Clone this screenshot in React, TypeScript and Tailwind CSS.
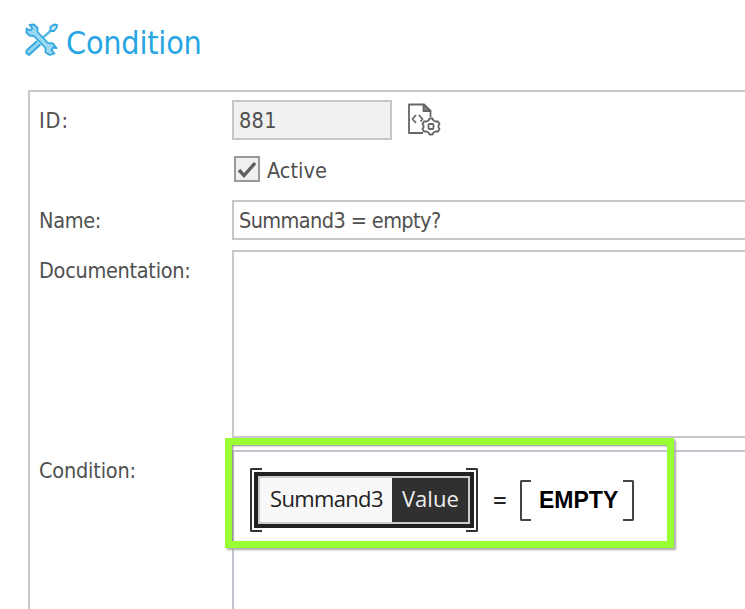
import type { ReactNode } from "react";

// Label + field row of the form
const Row = ({
  label,
  labelClass = "",
  className,
  children,
}: {
  label?: string;
  labelClass?: string;
  className: string;
  children: ReactNode;
}) => (
  <div className={`flex ${className}`}>
    <div className={`w-[202px] shrink-0 pl-[9px] pt-[7px] leading-[28px] ${labelClass}`}>{label}</div>
    {children}
  </div>
);

// Crossed wrench and screwdriver
const ToolsIcon = () => (
  <svg className="w-[33px] h-[34px] shrink-0" viewBox="0 0 33 34" fill="none" stroke="#35a9df" strokeWidth="1.8" strokeLinejoin="round">
    <path d="M17 15.5 L26 7.5" strokeWidth="2.4" stroke="#5fbce7" />
    <path d="M25.5 8 L25.5 4 L29 1.5 L32 2 L31.5 5 L29 8 Z" fill="#c8eaf8" />
    <path d="M12 18 L1.5 27.5 L1.5 30.5 L4 32 L15.5 21.5" fill="#8ed3f1" />
    <path d="M4.5 2 L9 1.5 L12.5 5 L12.5 9 L23 20 L28 20.5 L31.5 25 L28 24.5 L26.5 27 L29.5 30.5 L25 32 L20.5 29.5 L20.5 25 L9 13 L4.5 12.5 L1.5 9.5 L1.5 5.5 L5 7.5 L7.5 5.5 Z" fill="#9bd8f3" />
  </svg>
);

// Source file with a gear in front
const FileCodeIcon = () => (
  <svg className="w-[34px] h-[34px] shrink-0" viewBox="0 0 34 34" fill="none" stroke="#666" strokeWidth="1.8" strokeLinejoin="round">
    <path d="M16 30 H2 V1.5 H17 L23.5 8 V14" />
    <path d="M16.5 1.5 V8 H23.5 Z" fill="#888" />
    <path d="M9 12 L5.5 16 L9 20 M12 12 L15.5 16 L13.5 18.5" />
    <path d="M21.5 17.5 L22.5 15.5 H25.5 L26.5 17.5 L28.5 18.5 L31 18.5 L32.5 21 L31.5 22.5 V24.5 L32.5 26 L31 28.5 L28.5 28.5 L26.5 29.5 L25.5 31.5 H22.5 L21.5 29.5 L19.5 28.5 L17 28.5 L15.5 26 L16.5 24.5 V22.5 L15.5 21 L17 18.5 L19.5 18.5 Z" fill="#fff" strokeWidth="1.8" />
    <rect x="21.5" y="21" width="5" height="5" rx="1" />
  </svg>
);

const App = () => {
  return (
    <div className="h-[609px] w-[745px] overflow-hidden bg-white text-[#505050] text-[21.5px] font-['DejaVu_Sans_Condensed','DejaVu_Sans',sans-serif] [font-stretch:condensed]">
      {/* Page title */}
      <div className="flex h-[90px] pl-[25px] pt-[23px]">
        <ToolsIcon />
        <h1 className="ml-[8px] text-[32px] leading-[40px] tracking-[-0.2px] text-[#28a5e3]">Condition</h1>
      </div>

      {/* Form panel, cut off at the right and the bottom */}
      <div className="ml-[28px] h-[519px] border-l-2 border-t-2 border-[#c9c9c9] pt-[8px]">
        <Row label="ID:" labelClass="tracking-[0.9px]" className="h-[50px]">
          <div className="h-[40px] w-[160px] border-2 border-[#c8c8c8] bg-[#f1f1f1] pl-[5px] leading-[37px] tracking-[0.3px]">881</div>
          <div className="ml-[15px] pt-[3px]">
            <FileCodeIcon />
          </div>
        </Row>
        <Row className="h-[50px]">
          <div className="ml-[2px] mt-[6px] h-[26px] w-[26px] border-2 border-[#999] bg-[#f0f0f0]">
            <svg viewBox="0 0 22 22" className="size-[22px]" fill="none" stroke="#606060" strokeWidth="3.4">
              <path d="M3 12 L8 17.5 L19 5" />
            </svg>
          </div>
          <div className="ml-[7px] pt-[7px] leading-[28px]">Active</div>
        </Row>
        <Row label="Name:" labelClass="tracking-[-0.3px]" className="h-[50px]">
          <div className="h-[40px] grow border-y-2 border-l-2 border-[#c8c8c8] pl-[5px] leading-[37px] tracking-[-0.6px]">Summand3 = empty?</div>
        </Row>
        <Row label="Documentation:" labelClass="tracking-[-0.3px]" className="h-[200px]">
          <div className="h-[188px] grow border-y-2 border-l-2 border-[#c8c8c8]" />
        </Row>
        <Row label="Condition:" labelClass="tracking-[-0.2px]" className="h-[160px]">
          <div className="relative grow border-l-2 border-t-2 border-[#c3c3d0] text-[22px] text-[#222] font-['Open_Sans','Noto_Sans',sans-serif] [font-stretch:normal]">
            {/* Highlight frame */}
            <div className="absolute left-[-9px] top-[-14px] h-[110px] w-[449px] border-[7px] border-[#99ff33] shadow-[2px_2px_2px_#aaa,inset_1px_1px_2px_#888]" />
            <div className="flex pl-[16px] pt-[16px]">
              {/* Selected operand */}
              <div className="flex h-[64px] w-[228px]">
                <div className="w-[12px] rounded-l-[2px] border-y-2 border-l-2 border-[#333]" />
                <div className="relative z-10 -mx-[8px] my-[4px] flex w-[220px] border-4 border-[#222] bg-[#ccc] p-[2px]">
                  <div className="w-[132px] bg-[#f8f8f8] pl-[10px] leading-[41px] tracking-[-0.65px]">Summand3</div>
                  <div className="grow bg-[#303030] pl-[10px] leading-[41px] text-[#eee]">Value</div>
                </div>
                <div className="w-[12px] rounded-r-[2px] border-y-2 border-r-2 border-[#333]" />
              </div>
              <div className="ml-[15px] w-[15px] text-[24px] font-semibold leading-[63px]">=</div>
              <div className="ml-[12px] mt-[12px] flex h-[41px] w-[114px]">
                <div className="w-[11px] rounded-l-[2px] border-y-2 border-l-2 border-[#444]" />
                <div className="w-[92px] pl-[8px] text-[23px] font-bold leading-[40px] text-black font-['Liberation_Sans',sans-serif]">EMPTY</div>
                <div className="w-[11px] rounded-r-[2px] border-y-2 border-r-2 border-[#444]" />
              </div>
            </div>
          </div>
        </Row>
      </div>
    </div>
  );
};

export default App;
